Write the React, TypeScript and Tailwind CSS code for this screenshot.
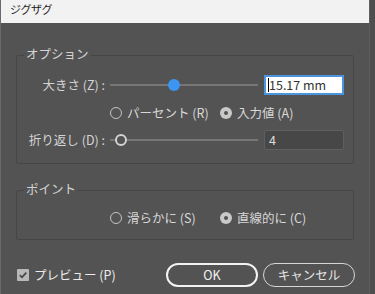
import React from 'react';

const FONT = { fontFamily: '"Noto Sans CJK JP", "Noto Sans", sans-serif' };

/* ------------------------------------------------------------------ */
/*  Small controls                                                     */
/* ------------------------------------------------------------------ */

function Radio({ checked, label }: { checked?: boolean; label: string }) {
  return (
    <div className="flex w-[110px] items-center gap-[5px]">
      {checked ? (
        <span className="flex h-[12px] w-[12px] items-center justify-center rounded-full bg-[#c9c9c9]">
          <span className="h-[4px] w-[4px] rounded-full bg-[#535353]" />
        </span>
      ) : (
        <span className="h-[12px] w-[12px] rounded-full border-[1.5px] border-[#c4c4c4]" />
      )}
      <span className="text-[12.5px] leading-none text-[#d8d8d8]">{label}</span>
    </div>
  );
}

function Slider({ offset, active }: { offset: number; active?: boolean }) {
  return (
    <div className="relative ml-[5px] flex h-[20px] w-[148px] items-center">
      <div className="h-[2px] w-full bg-[#767676]" />
      {active ? (
        <span
          className="absolute top-[4px] h-[12px] w-[12px] rounded-full bg-[#3d95f2]"
          style={{ left: offset }}
        />
      ) : (
        <span
          className="absolute top-[4px] h-[12px] w-[12px] rounded-full border-2 border-[#d2d2d2] bg-[#535353]"
          style={{ left: offset }}
        />
      )}
    </div>
  );
}

function Group({ title, className, children }: { title: string; className?: string; children: React.ReactNode }) {
  return (
    <div className={`relative w-[338px] rounded-[2px] border border-[#464646] ${className ?? ''}`}>
      <span className="absolute -top-[8px] left-[7px] bg-[#535353] px-[2px] text-[12.5px] leading-none text-[#d4d4d4]">
        {title}
      </span>
      {children}
    </div>
  );
}

/* ------------------------------------------------------------------ */
/*  Dialog                                                             */
/* ------------------------------------------------------------------ */

export default function App() {
  return (
    <div className="flex h-[294px] w-[375px] overflow-hidden bg-[#535353]" style={FONT}>
      <div className="flex w-[369px] flex-col border-l border-[#6a6a6a]">
        {/* Title bar */}
        <div className="flex h-[23px] items-center bg-[#f2f2f2] pb-[5px] pl-[9px]">
          <span className="text-[11px] leading-none tracking-[-0.5px] text-[#1c1c1c]">ジグザグ</span>
        </div>

        <div className="flex flex-col pl-[15px]">
          {/* Options */}
          <Group title="オプション" className="mt-[32px] h-[109px] pt-[19px]">
            <div className="flex h-[20px] items-center">
              <span className="w-[88px] text-right text-[12.5px] leading-none text-[#d4d4d4]">大きさ (Z) :</span>
              <Slider offset={58} active />
              <div className="ml-[6px] flex h-[20px] w-[80px] items-center border-2 border-[#4a94e0] bg-white pl-[2px]">
                <span className="h-[14px] w-px bg-black" />
                <span className="text-[12.5px] leading-none text-[#333]">15.17 mm</span>
              </div>
            </div>

            <div className="mt-[11px] flex h-[14px] items-center pl-[93px]">
              <Radio label="パーセント (R)" />
              <Radio checked label="入力値 (A)" />
            </div>

            <div className="mt-[10px] flex h-[20px] items-center">
              <span className="w-[88px] text-right text-[12.5px] leading-none text-[#d4d4d4]">折り返し (D) :</span>
              <Slider offset={5} />
              <div className="ml-[6px] flex h-[20px] w-[80px] items-center rounded-[2px] border border-[#5f5f5f] bg-[#474747] pl-[4px]">
                <span className="text-[12.5px] leading-none text-[#dcdcdc]">4</span>
              </div>
            </div>
          </Group>

          {/* Points */}
          <Group title="ポイント" className="mt-[26px] h-[50px] pt-[20px]">
            <div className="flex h-[14px] items-center pl-[93px]">
              <Radio label="滑らかに (S)" />
              <Radio checked label="直線的に (C)" />
            </div>
          </Group>

          {/* Footer */}
          <div className="mt-[23px] flex h-[24px] items-center">
            <div className="ml-[1px] flex items-center gap-[5px]">
              <span className="flex h-[12px] w-[12px] items-center justify-center rounded-[1px] bg-[#b8b8b8]">
                <svg width="10" height="10" viewBox="0 0 10 10">
                  <path d="M1.8 5.2 L4 7.3 L8.3 2.6" fill="none" stroke="#474747" strokeWidth="1.8" />
                </svg>
              </span>
              <span className="text-[12.5px] leading-none text-[#ececec]">プレビュー (P)</span>
            </div>
            <button className="ml-auto flex h-[24px] w-[92px] items-center justify-center rounded-full border-2 border-[#f2f2f2] text-[12.5px] leading-none text-[#f4f4f4]">
              OK
            </button>
            <button className="ml-[5px] mr-[14px] flex h-[24px] w-[92px] items-center justify-center rounded-full border border-[#d6d6d6] text-[12.5px] leading-none text-[#e4e4e4]">
              キャンセル
            </button>
          </div>
        </div>
      </div>
      <div className="w-[6px] border-l border-[#5f5f5f] bg-[#4e4e4e]" />
    </div>
  );
}
